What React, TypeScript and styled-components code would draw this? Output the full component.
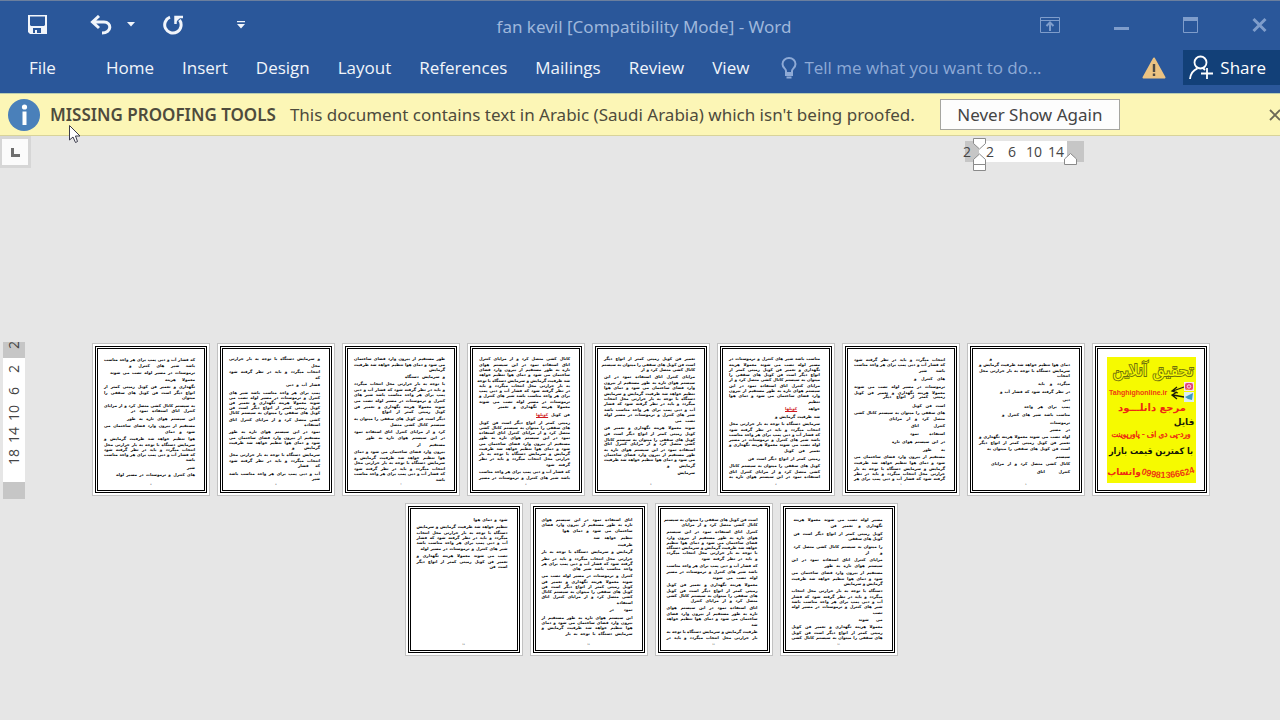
import React from "react";
import styled, { createGlobalStyle } from "styled-components";

const Global = createGlobalStyle`
  * { box-sizing: border-box; }
  body { margin: 0; background: #e6e6e6; font-family: "Open Sans", "Noto Sans", sans-serif; overflow-x: hidden; }
  button, input { font: inherit; color: inherit; background: none; border: 0; padding: 0; margin: 0; }
  svg { display: block; }
`;

const Shell = styled.div`
  display: flex;
  flex-direction: column;
  min-height: 100vh;
  overflow: hidden;
`;

/* ---------- title bar and ribbon ---------- */

const Header = styled.header`
  background: #2a579a;
  border-top: 1px solid #6b7f9e;
  color: #f1f5fb;
  font-size: 17px;
`;

const TitleBar = styled.div`
  display: grid;
  grid-template-columns: 1fr auto 1fr;
  align-items: center;
  height: 47px;
`;

const QuickAccess = styled.div`
  display: grid;
  grid-template-columns: 76px 50px 10px 74px 62px;
`;

const IconButton = styled.button`
  display: flex;
  align-items: center;
  justify-content: center;
`;

const DocTitle = styled.h1`
  margin: 0;
  padding: 5px 0 0 8px;
  font-family: "Noto Sans", "Open Sans", sans-serif;
  font-size: 17px;
  font-weight: 400;
  line-height: 24px;
  color: #9fb7dc;
`;

const WindowControls = styled.div`
  display: flex;
  justify-content: flex-end;
  gap: 54px;
  padding-right: 13px;
  color: #7f9dcb;
`;

const Ribbon = styled.nav`
  display: flex;
  align-items: center;
  height: 45px;
  padding: 0 0 6px 29px;
`;

const TabList = styled.div`
  display: flex;
  gap: 28px;
`;

const Tab = styled.button<{ $file?: boolean }>`
  line-height: 24px;
  margin-right: ${(p) => (p.$file ? "22px" : "0")};
`;

const TellMe = styled.label`
  display: flex;
  flex: 1;
  align-items: center;
  gap: 7px;
  padding-left: 32px;
  color: #8eaad6;
`;

const TellMeInput = styled.input`
  flex: 1;
  min-width: 0;
  line-height: 24px;
  &::placeholder { color: #8eaad6; opacity: 1; }
`;

const ShareButton = styled.button`
  display: flex;
  align-items: center;
  gap: 7px;
  height: 35px;
  margin-left: 17px;
  padding: 0 14px 0 6px;
  background: #124078;
  color: #ffffff;
`;

/* ---------- message bar ---------- */

const MessageBar = styled.section`
  display: flex;
  align-items: center;
  height: 43px;
  padding-left: 8px;
  background: #fcf6b6;
  border-top: 1px solid #b9cdb0;
  border-bottom: 1px solid #d8d39a;
  color: #4e4b3c;
  font-family: "Noto Sans", "Open Sans", sans-serif;
  font-size: 17px;
  line-height: 24px;
  white-space: nowrap;
`;

const MessageTitle = styled.strong`
  margin: 0 14px 0 10px;
  font-weight: 600;
`;

const MessageButton = styled.button`
  height: 31px;
  width: 180px;
  margin-left: 25px;
  background: #fdfdfd;
  border: 1px solid #a5a5a0;
  color: #444444;
`;

const MessageClose = styled.button`
  margin: 0 -1px 0 auto;
  color: #6b6856;
`;

const Pointer = styled.div`
  position: absolute;
  left: 68px;
  top: 124px;
`;

/* ---------- rulers ---------- */

const RulerRow = styled.div`
  display: flex;
  justify-content: space-between;
  align-items: flex-start;
  height: 36px;
  padding-right: 196px;
`;

const TabSelector = styled.button`
  width: 31px;
  height: 32px;
  display: flex;
  align-items: center;
  justify-content: center;
  background: #fbfbfb;
  border: 3px solid #d6d6d6;
  border-left-width: 2px;
`;

const HorizontalRuler = styled.div`
  position: relative;
  display: flex;
  margin-top: 5px;
  height: 21px;
  font: 14px/22px "Open Sans", "Noto Sans", sans-serif;
  color: #444444;
`;

const RulerMargin = styled.div<{ $size: number }>`
  width: ${(p) => p.$size}px;
  background: #c6c6c6;
  white-space: nowrap;
`;

const RulerOverhang = styled.span`
  margin-left: -2px;
`;

const RulerScale = styled.div`
  display: flex;
  background: #ffffff;
`;

const RulerMark = styled.span`
  width: 22px;
  text-align: center;
`;

const Marker = styled.svg<{ $x: number; $y: number }>`
  position: absolute;
  left: ${(p) => p.$x}px;
  top: ${(p) => p.$y}px;
`;

const Workspace = styled.main`
  display: flex;
  align-items: flex-start;
  padding: 170px 3px 0 3px;
`;

const VerticalRuler = styled.div`
  flex: none;
  width: 22px;
  font: 14px/22px "Open Sans", "Noto Sans", sans-serif;
  color: #444444;
  overflow: hidden;
`;

const VerticalMargin = styled.div<{ $size: number }>`
  display: flex;
  align-items: flex-end;
  height: ${(p) => p.$size}px;
  padding-bottom: 2px;
  background: #c6c6c6;
  overflow: hidden;
`;

const VerticalScale = styled.div`
  height: 124px;
  background: #ffffff;
`;

const VerticalMark = styled.div`
  width: 22px;
  height: 22px;
  text-align: center;
  transform: rotate(-90deg);
`;

/* ---------- pages ---------- */

const PageGrid = styled.div`
  flex: 1;
  display: flex;
  flex-wrap: wrap;
  justify-content: center;
  gap: 7px;
  padding: 1px 67px 0;
  direction: rtl;
`;

const Sheet = styled.article`
  display: flex;
  width: 118px;
  height: 153px;
  padding: 2px;
  background: #ffffff;
  border: 1px solid #c2c2c2;
`;

const Frame = styled.div`
  flex: 1;
  display: flex;
  flex-direction: column;
  align-items: stretch;
  border: 3px double #000000;
`;

const Copy = styled.div<{ $top: number }>`
  flex: 1;
  padding: ${(p) => p.$top}px 9px 0 6px;
  font: 700 4px/5px "DejaVu Sans", sans-serif;
  color: #000000;
`;

const Line = styled.div<{ $width: number; $height: number; $end?: boolean }>`
  width: ${(p) => p.$width}px;
  height: ${(p) => p.$height}px;
  margin-right: ${(p) => (p.$end ? "auto" : "0")};
  white-space: nowrap;
  text-align: justify;
  text-align-last: justify;
`;

const Flag = styled.span`
  color: #d01820;
  text-decoration: underline 1px #d01820;
`;

const Folio = styled.footer`
  height: 8px;
  text-align: center;
  font: 2px/5px "DejaVu Sans", sans-serif;
  color: #444444;
`;

const PosterSlot = styled.div`
  flex: 1;
  padding: 8px 8px 0 8px;
`;

type Row = { y: number; w: number; flagged?: boolean; end?: boolean };

/* Each page lists its rows as "y" (full width) or "y:width"; "!" flags a spelling error, "<" aligns to the far edge. */
const FULL = 91;
const pages: string[] = [
  "14:13< 20 26 31:24 39:32 47:70 55:5 62:46 70:68 78:17 85:20 92 98 104:83 112:10 119:79 127:33",
  "15 20 26:26 34:31 42 48 52:62 61:33 68 74:56 81:34 89:35 97:53 105:22 112 118 124 129 134",
  "14 20 25 30 35 41 46 51 57:25 64:35! 72:45 79 85 90 95 100 106:36 114:72 121 127 132",
  "14 20 25:54 32 38 43 49 54 59 65 70 76:20 83 89 95 99 105 110 115 121:28 128:25",
  "14 20 25 30 36 41 46 51 57 62:72 70:34! 78 83 88 93 99 104 109 114 120:24 127 133",
  "14 20 25:5 32:40 39 45 50 56 62 67:63 74 80:55 87 93:79 100:28 107 113 118 124 129 135:5",
  "14 21:5 27 33:15 40:34 48 53 58 63 68 75 80:8 87 93 98 103:28 110 116 121:22 129 134:17",
  "15 21:66 28:85 35:30 42 48 53:5 61 66:64 74:68 81 87:30 94 100 105 110 115:5 123:10 130:79",
  "15:89 21:52 29:89 34:34 42:89 48:17 55 61:58 68 74 79:37 86 92 97 102 108:6 115:24 122 128 133",
  "15 20:76 27 33 38 43 48 54:56 61 67 73:45 80 86 91 96:67 103 109 114 120:20 127 133",
  "15 20 26:70 33:39 40:10 47 54 59 64:60 71 77 82 87 92 98:29 105:23 113 118 123 129:67",
  "15:34 22 28 33 38 44:87 51 57 62:18",
];

const words = (
  "فن کویل های سقفی را میتوان به سیستم کانال کشی متصل کرد و از مزایای کنترل اتاق استفاده نمود " +
  "در این سیستم هوای تازه به طور مستقیم از بیرون وارد فضای ساختمان می شود و دمای هوا تنظیم خواهد شد " +
  "ظرفیت گرمایش و سرمایش دستگاه با توجه به بار حرارتی محل انتخاب میگردد و باید در نظر گرفته شود که " +
  "فشار آب و دبی پمپ برای هر واحد مناسب باشد شیر های کنترل و ترموستات در مسیر لوله نصب می شوند " +
  "معمولا هزینه نگهداری و تعمیر فن کویل زمینی کمتر از انواع دیگر است"
).split(" ");

function parseRows(spec: string): Row[] {
  return spec.split(" ").map((item) => {
    const [y, w] = item.replace(/[!<]/g, "").split(":");
    return { y: Number(y), w: w ? Number(w) : FULL, flagged: item.includes("!"), end: item.includes("<") };
  });
}

/* Takes as many words as fit the row, by their estimated width. */
function takeWords(start: number, width: number): string[] {
  const out: string[] = [];
  let used = 0;
  for (let i = start; ; i++) {
    const word = words[i % words.length];
    const size = word.length * 2.4 + 1.7;
    if (out.length > 0 && used + size > width) return out;
    out.push(word);
    used += size;
  }
}

function TextPage({ spec, page }: { spec: string; page: number }) {
  const rows = parseRows(spec);
  let cursor = page * 17;
  return (
    <Sheet>
      <Frame>
        <Copy $top={rows[0].y - 7}>
          {rows.map((row, i) => {
            const next = rows[i + 1];
            const text = takeWords(cursor, row.w - (row.flagged ? 16 : 0));
            cursor += text.length;
            return (
              <Line key={row.y} $width={row.w} $height={next ? next.y - row.y : 5} $end={row.end}>
                {text.join(" ")}
                {row.flagged && <> <Flag>کویلها</Flag></>}
              </Line>
            );
          })}
        </Copy>
        <Folio>{page}</Folio>
      </Frame>
    </Sheet>
  );
}

function Poster() {
  const fa = '"DejaVu Sans", sans-serif';
  const condensed = '"DejaVu Sans Condensed", "DejaVu Sans", sans-serif';
  const latin = '"Liberation Sans Narrow", "Liberation Sans", sans-serif';
  return (
    <svg width="89" height="126" viewBox="0 0 89 126" direction="rtl">
      <rect width="89" height="126" fill="#f6fa00" />
      <g fontFamily={fa} textAnchor="middle" fontWeight="700">
        <text x="46" y="19" fontSize="16" fontWeight="400" fill="#f6fa00" stroke="#6f710c" strokeWidth="1.8" paintOrder="stroke">تحقیق آنلاین</text>
        <text x="45" y="54" fontSize="10" fill="#ee2a12">مرجع دانلـــود</text>
        <text x="77" y="68" fontSize="9" fill="#1c1c08">فایل</text>
        <text x="44" y="80" fontSize="8" fontWeight="400" stroke="#ee2a12" strokeWidth="0.4" fill="#ee2a12" fontFamily={condensed}>ورد-پی دی اف - پاورپوینت</text>
        <text x="44" y="97" fontSize="9" fill="#111108" fontFamily={condensed}>با کمترین قیمت بازار</text>
        <text x="17" y="118" fontSize="9" fill="#ee2a12">واتساپ</text>
      </g>
      <g fontFamily={latin} fontWeight="700" fill="#ee3a12" direction="ltr">
        <text x="2" y="38" fontSize="7">Tahghighonline.ir</text>
        <path id="arc" d="M34 117 Q60 126 89 115" fill="none" />
        <text fontSize="9"><textPath href="#arc">09981366624</textPath></text>
      </g>
      <path d="M77 30 L66 34 M70 30 L65 34 L71 36 M77 40 L66 38 M70 35 L65 38 L70 42" stroke="#1a1a08" strokeWidth="1.3" fill="none" />
      <rect x="77" y="25" width="10" height="9" fill="#f8e4ee" />
      <rect x="78" y="26" width="8" height="7" rx="2" fill="#e0447c" />
      <path d="M78 31 L80 33 H84 Z" fill="#f0a040" />
      <circle cx="82" cy="29.500" r="1.700" fill="none" stroke="#ffffff" strokeWidth="0.800" />
      <rect x="77" y="35" width="10" height="10" fill="#dceef4" />
      <path d="M78 40 L86 36 L85 43 L81 42 Z" fill="#3d9ac0" />
    </svg>
  );
}

const tabs = ["File", "Home", "Insert", "Design", "Layout", "References", "Mailings", "Review", "View"];

export default function App() {
  return (
    <Shell>
      <Global />
      <Header>
        <TitleBar>
          <QuickAccess>
            <IconButton aria-label="Save">
              <svg width="20" height="20" viewBox="0 0 20 20" fill="currentColor">
                <path fillRule="evenodd" d="M0 0H19V19H2L0 17ZM2 1.500V10L3 11H16L17 10V1.500ZM5 13V18H7V15H9V18H13V13Z" />
              </svg>
            </IconButton>
            <IconButton aria-label="Undo">
              <svg width="22" height="20" viewBox="0 0 22 20" fill="none" stroke="currentColor" strokeWidth="3">
                <path d="M9 1L2.500 7L9 13M3 7H14C22 7 22 18 12 18" />
              </svg>
            </IconButton>
            <IconButton aria-label="Undo history">
              <svg width="8" height="5" viewBox="0 0 8 5" fill="currentColor"><path d="M0 0H8L4 4.500Z" /></svg>
            </IconButton>
            <IconButton aria-label="Repeat">
              <svg width="21" height="20" viewBox="0 0 21 20" fill="none" stroke="currentColor" strokeWidth="3">
                <path d="M7 2.200A8.200 8.200 0 1 0 16.500 5" />
                <path d="M12.500 9V2H20" strokeWidth="2.500" />
                <path d="M12 1H19L12 8Z" fill="currentColor" stroke="none" />
              </svg>
            </IconButton>
            <IconButton aria-label="Customize Quick Access Toolbar">
              <svg width="8" height="8" viewBox="0 0 8 8" fill="currentColor"><path d="M0 0H8V1.300H0ZM0 3H8L4 7.500Z" /></svg>
            </IconButton>
          </QuickAccess>
          <DocTitle>fan kevil [Compatibility Mode] - Word</DocTitle>
          <WindowControls>
            <IconButton aria-label="Ribbon Display Options">
              <svg width="20" height="16" viewBox="0 0 20 16" fill="none" stroke="currentColor">
                <path d="M0.500 0.500H19.500V15.500H0.500ZM0.500 3.500H19.500" />
                <path d="M10 14V5.500M6.500 9L10 5.500L13.500 9" strokeWidth="2" />
              </svg>
            </IconButton>
            <IconButton aria-label="Minimize">
              <svg width="15" height="16" viewBox="0 0 15 16"><path d="M0 10H15V13H0Z" fill="currentColor" /></svg>
            </IconButton>
            <IconButton aria-label="Maximize">
              <svg width="15" height="16" viewBox="0 0 15 16" fill="none" stroke="currentColor">
                <path d="M0.500 0.500H14.500V15.500H0.500Z" /><path d="M0 2H15" strokeWidth="4" />
              </svg>
            </IconButton>
            <IconButton aria-label="Close">
              <svg width="15" height="16" viewBox="0 0 15 16"><path d="M1.500 2L13.500 14M13.500 2L1.500 14" stroke="currentColor" strokeWidth="3" /></svg>
            </IconButton>
          </WindowControls>
        </TitleBar>
        <Ribbon>
          <TabList>
            {tabs.map((t) => <Tab key={t} $file={t === "File"}>{t}</Tab>)}
          </TabList>
          <TellMe>
            <svg width="16" height="22" viewBox="0 0 16 22" fill="none" stroke="currentColor" strokeWidth="2">
              <path d="M5 16V14C5 11.500 1.500 11 1.500 7A6.500 6 0 0 1 14.500 7C14.500 11 11 11.500 11 14V16Z" />
              <path d="M4 18H12M5.500 20.500H10.500" />
            </svg>
            <TellMeInput aria-label="Tell me what you want to do" placeholder="Tell me what you want to do..." />
          </TellMe>
          <IconButton aria-label="Activation warning">
            <svg width="24" height="22" viewBox="0 0 24 22">
              <path d="M12 1.500L22.500 20.500H1.500Z" fill="#ebc382" stroke="#ebc382" strokeWidth="2" strokeLinejoin="round" />
              <path d="M12 7V15M12 16.500V19" stroke="#4d4a45" strokeWidth="2.400" />
            </svg>
          </IconButton>
          <ShareButton>
            <svg width="24" height="25" viewBox="0 0 24 25" fill="none" stroke="currentColor" strokeWidth="1.800">
              <circle cx="11.500" cy="7.500" r="6" />
              <path d="M1 24C1.500 18 4.500 15 8.500 13.300M14 13L16 15M18 13V24M12 18.500H24" />
            </svg>
            Share
          </ShareButton>
        </Ribbon>
      </Header>

      <MessageBar>
        <svg width="32" height="32" viewBox="0 0 32 32">
          <circle cx="16" cy="16" r="16" fill="#4a80ba" />
          <circle cx="16.500" cy="8" r="2.600" fill="#ffffff" />
          <path d="M14.500 12.500H18.500V26H14.500Z" fill="#ffffff" />
        </svg>
        <MessageTitle>MISSING PROOFING TOOLS</MessageTitle>
        <span>This document contains text in Arabic (Saudi Arabia) which isn't being proofed.</span>
        <MessageButton>Never Show Again</MessageButton>
        <MessageClose aria-label="Close message">
          <svg width="12" height="12" viewBox="0 0 12 12"><path d="M1 1L11 11M11 1L1 11" stroke="currentColor" strokeWidth="1.800" /></svg>
        </MessageClose>
      </MessageBar>

      <RulerRow>
        <TabSelector aria-label="Left tab">
          <svg width="9" height="9" viewBox="0 0 9 9"><path d="M0 0H3V6H9V9H0Z" fill="#6e6e6e" /></svg>
        </TabSelector>
        <HorizontalRuler>
          <RulerMargin $size={14}><RulerOverhang>2</RulerOverhang></RulerMargin>
          <RulerScale>
            {[2, 6, 10, 14].map((n) => <RulerMark key={n}>{n}</RulerMark>)}
          </RulerScale>
          <RulerMargin $size={17} />
          <Marker $x={8} $y={-3} width="13" height="33" viewBox="0 0 13 33" fill="#ffffff" stroke="#8a8a8a">
            <path d="M0.500 0.500H12.500V5.500L6.500 11L0.500 5.500ZM6.500 16L12.500 21.500V26.500H0.500V21.500ZM0.500 26.500H12.500V32.500H0.500Z" />
          </Marker>
          <Marker $x={99} $y={12} width="13" height="12" viewBox="0 0 13 12" fill="#ffffff" stroke="#8a8a8a">
            <path d="M6.500 0.500L12.500 6V11.500H0.500V6Z" />
          </Marker>
        </HorizontalRuler>
      </RulerRow>

      <Workspace>
        <VerticalRuler>
          <VerticalMargin $size={16}><VerticalMark>2</VerticalMark></VerticalMargin>
          <VerticalScale>
            {[2, 6, 10, 14, 18].map((n) => <VerticalMark key={n}>{n}</VerticalMark>)}
          </VerticalScale>
          <VerticalMargin $size={17} />
        </VerticalRuler>
        <PageGrid>
          <Sheet>
            <Frame><PosterSlot><Poster /></PosterSlot></Frame>
          </Sheet>
          {pages.map((spec, i) => <TextPage key={i} spec={spec} page={i + 2} />)}
        </PageGrid>
      </Workspace>

      <Pointer>
        <svg width="14" height="20" viewBox="0 0 14 20">
          <path d="M1.500 1.500V16L5 13L7.500 18.500L9.500 17.500L7.500 12H12Z" fill="#ffffff" stroke="#3a3a4a" />
        </svg>
      </Pointer>
    </Shell>
  );
}
